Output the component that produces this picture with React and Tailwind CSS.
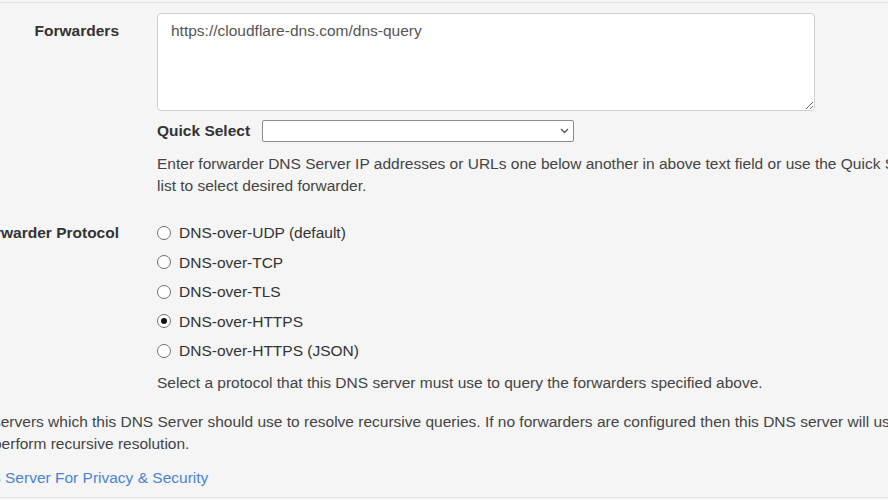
import React from 'react';

const protocols = [
  { id: 'udp', label: 'DNS-over-UDP (default)' },
  { id: 'tcp', label: 'DNS-over-TCP' },
  { id: 'tls', label: 'DNS-over-TLS' },
  { id: 'https', label: 'DNS-over-HTTPS' },
  { id: 'json', label: 'DNS-over-HTTPS (JSON)' },
];

const Radio = ({ checked, label }) => (
  <label className="flex items-center h-[29.5px] cursor-pointer">
    <span className="flex items-center justify-center w-[14px] h-[14px] rounded-full border border-[#707070] bg-white">
      {checked && <span className="w-[6px] h-[6px] rounded-full bg-[#111]" />}
    </span>
    <span className="ml-[8px]">{label}</span>
  </label>
);

const App = () => {
  return (
    <div className="w-[888px] h-[500px] overflow-hidden bg-[#f5f5f5] text-[15.5px] text-[#333] font-['Liberation_Sans',Arial,sans-serif]">
      <div className="mt-[2px] -ml-[40px] w-[1100px] border-t border-[#e4e4e4] pt-[10px]">
        {/* Forwarders */}
        <div className="flex gap-[38px]">
          <div className="w-[159px] shrink-0 text-right font-bold leading-[22px] pt-[7px]">
            Forwarders
          </div>
          <div className="w-[785px]">
            <textarea
              defaultValue="https://cloudflare-dns.com/dns-query"
              className="block w-[658px] h-[98px] bg-white border border-[#cfcfcf] rounded-[4px] px-[13px] py-[8px] text-[#555] leading-[18px] outline-none"
            />
            <div className="flex items-center mt-[9px] h-[22px]">
              <span className="font-bold">Quick Select</span>
              <div className="relative ml-[12px]">
                <select className="block appearance-none w-[312px] h-[22px] bg-white border border-[#8c8c8c] rounded-[2px] outline-none">
                  <option></option>
                </select>
                <svg
                  className="absolute right-[5px] top-[8px] pointer-events-none"
                  width="9"
                  height="6"
                  viewBox="0 0 9 6"
                  fill="none"
                >
                  <path d="M1 1l3.5 3.5L8 1" stroke="#555" strokeWidth="1.4" />
                </svg>
              </div>
            </div>
            <p className="mt-[11px] leading-[22px] text-[#444]">
              Enter forwarder DNS Server IP addresses or URLs one below another in above text field or use the Quick Select list to select desired forwarder.
            </p>
          </div>
        </div>

        {/* Forwarder Protocol */}
        <div className="flex gap-[38px] mt-[21px]">
          <div className="w-[159px] shrink-0 text-right font-bold leading-[29.5px] whitespace-nowrap">
            Forwarder Protocol
          </div>
          <div className="w-[785px]">
            {protocols.map((p) => (
              <Radio key={p.id} label={p.label} checked={p.id === 'https'} />
            ))}
            <p className="mt-[6px] leading-[22px] text-[#444]">
              Select a protocol that this DNS server must use to query the forwarders specified above.
            </p>
          </div>
        </div>

        <p className="mt-[17px] pl-[33px] leading-[22px] text-[#444]">
          servers which this DNS Server should use to resolve recursive queries. If no forwarders are configured then this DNS server will use root servers to
          <br />
          perform recursive resolution.
        </p>

        <div className="mt-[12px] pl-[8px] leading-[22px]">
          <a href="#" className="text-[#4a84d2]">DNS Server For Privacy &amp; Security</a>
        </div>

        <div className="mt-[8px] border-b border-[#e4e4e4]" />
      </div>
    </div>
  );
};

export default App;
